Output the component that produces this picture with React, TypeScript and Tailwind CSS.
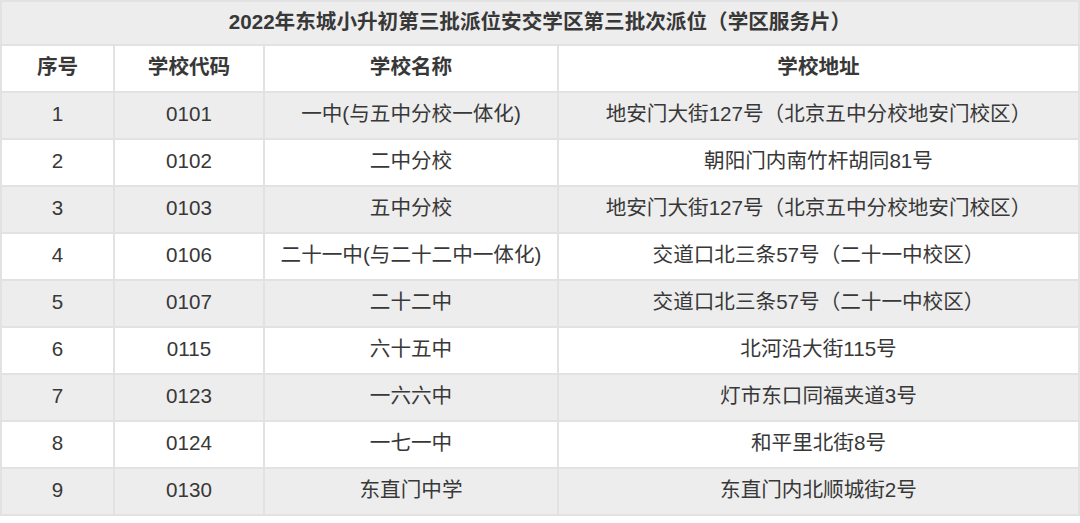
const rows = [
  ["1", "0101", "一中(与五中分校一体化)", "地安门大街127号（北京五中分校地安门校区）"],
  ["2", "0102", "二中分校", "朝阳门内南竹杆胡同81号"],
  ["3", "0103", "五中分校", "地安门大街127号（北京五中分校地安门校区）"],
  ["4", "0106", "二十一中(与二十二中一体化)", "交道口北三条57号（二十一中校区）"],
  ["5", "0107", "二十二中", "交道口北三条57号（二十一中校区）"],
  ["6", "0115", "六十五中", "北河沿大街115号"],
  ["7", "0123", "一六六中", "灯市东口同福夹道3号"],
  ["8", "0124", "一七一中", "和平里北街8号"],
  ["9", "0130", "东直门中学", "东直门内北顺城街2号"],
];

export default function App() {
  return (
    <div
      className="w-[1080px] h-[523px] bg-white text-[#383838] overflow-hidden"
      style={{ fontFamily: '"Liberation Sans", "Noto Sans CJK SC", sans-serif' }}
    >
      <table className="w-[1080px] table-fixed border-collapse border-2 border-[#e2e2e2] text-[20.6px] leading-none">
        <colgroup>
          <col className="w-[113px]" />
          <col className="w-[150px]" />
          <col className="w-[294px]" />
          <col />
        </colgroup>
        <thead>
          <tr className="h-[44px] bg-[#ededed]">
            <th colSpan={4} className="border-2 border-[#e2e2e2] font-bold text-center pb-[2px]">
              2022年东城小升初第三批派位安交学区第三批次派位（学区服务片）
            </th>
          </tr>
          <tr className="h-[47px] bg-white">
            {["序号", "学校代码", "学校名称", "学校地址"].map((h) => (
              <th key={h} className="border-2 border-[#e2e2e2] font-bold text-center pb-[2px]">
                {h}
              </th>
            ))}
          </tr>
        </thead>
        <tbody>
          {rows.map((r, i) => (
            <tr key={r[0]} className={`h-[47px] ${i % 2 === 0 ? "bg-[#ededed]" : "bg-white"}`}>
              {r.map((c, j) => (
                <td key={j} className="border-2 border-[#e2e2e2] text-center pb-[3px]">
                  {c}
                </td>
              ))}
            </tr>
          ))}
        </tbody>
      </table>
    </div>
  );
}
